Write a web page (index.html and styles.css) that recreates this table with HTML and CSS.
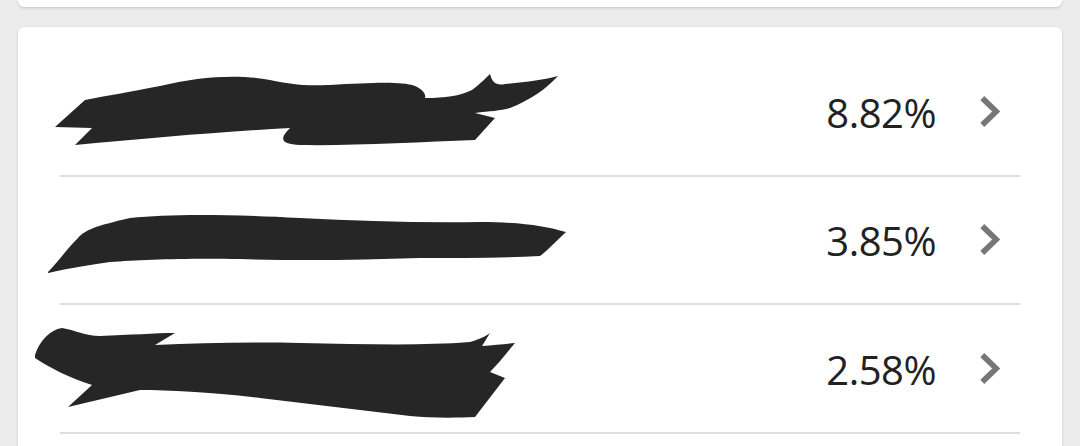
FILE: index.html
```html
<!DOCTYPE html>
<html lang="en">
<head>
  <meta charset="UTF-8">
  <meta name="viewport" content="width=device-width, initial-scale=1.0">
  <title>Shares</title>
  <link rel="stylesheet" href="styles.css">
</head>
<body>

  <!-- Previous card, only its bottom edge is visible -->
  <div class="card card-top"></div>

  <div class="card card-list">
    <div class="row">
      <span class="name"></span>
      <span class="percent">8.82%</span>
      <svg class="chevron" viewBox="0 0 20 32"><path d="M3 3 L16.5 16 L3 29"/></svg>
    </div>
    <div class="row">
      <span class="name"></span>
      <span class="percent">3.85%</span>
      <svg class="chevron" viewBox="0 0 20 32"><path d="M3 3 L16.5 16 L3 29"/></svg>
    </div>
    <div class="row">
      <span class="name"></span>
      <span class="percent">2.58%</span>
      <svg class="chevron" viewBox="0 0 20 32"><path d="M3 3 L16.5 16 L3 29"/></svg>
    </div>
  </div>

  <!-- Redaction scribbles drawn over the names -->
  <svg class="redact" viewBox="0 0 1080 446" width="1080" height="446">
    <path d="M55 127 L85 100 C110 95 130 92 160 86 C200 76 240 74 270 80 C290 84 300 86 330 85 C370 83 400 81 415 86 C424 90 426 95 425 98 C445 98 460 96 472 90 C480 84 486 78 490 74 C492 82 496 86 505 84 C525 82 545 80 558 76 C545 90 530 100 510 108 C500 111 490 111 475 113 L495 118 L475 140 C420 142 350 146 300 145 C282 144 278 140 290 128 C220 132 150 138 75 145 L92 128 Z"/>
    <path d="M48 272 C58 262 66 250 78 238 C85 230 95 226 130 218 C170 214 220 214 300 218 C360 221 420 223 480 222 C520 222 545 226 566 232 C555 242 548 250 540 256 C500 258 460 258 420 258 C360 260 300 261 240 259 C180 258 140 260 110 262 C90 265 70 268 48 273 Z"/>
    <path d="M35 355 C40 340 50 330 62 328 C75 330 85 336 100 336 C130 335 155 333 175 333 L155 345 C200 343 250 342 300 343 C360 344 420 346 470 342 C480 339 486 336 490 333 L482 346 C495 345 505 344 515 343 C505 355 498 364 490 372 L505 378 L475 417 C455 418 430 418 410 416 C360 410 310 404 260 398 C210 392 170 390 140 390 L68 407 L92 385 C70 378 50 368 35 358 Z"/>
  </svg>

</body>
</html>
```

FILE: styles.css
```css
* {
  margin: 0;
  padding: 0;
  box-sizing: border-box;
}

body {
  background: #ececec;
  font-family: 'Open Sans', sans-serif;
  width: 1080px;
  height: 446px;
  overflow: hidden;
  position: relative;
}

.card {
  background: #fff;
  margin: 0 18px;
  border-radius: 6px;
  box-shadow: 0 1px 3px rgba(0, 0, 0, 0.18);
}

.card-top {
  height: 7px;
  border-radius: 0 0 6px 6px;
  margin-bottom: 20px;
}

.card-list {
  padding: 21px 42px 60px 42px;
}

.row {
  display: flex;
  align-items: center;
  height: 128.5px;
  border-bottom: 2px solid #dedede;
}

.name {
  flex: 1;
}

.percent {
  font-size: 40px;
  color: #222;
  letter-spacing: -0.5px;
  padding-top: 2px;
}

.chevron {
  width: 21px;
  height: 33px;
  margin-left: 43px;
  margin-right: 20px;
}

.chevron path {
  fill: none;
  stroke: #777;
  stroke-width: 5.5;
}

.redact {
  position: absolute;
  top: 0;
  left: 0;
}

.redact path {
  fill: #262626;
}
```
